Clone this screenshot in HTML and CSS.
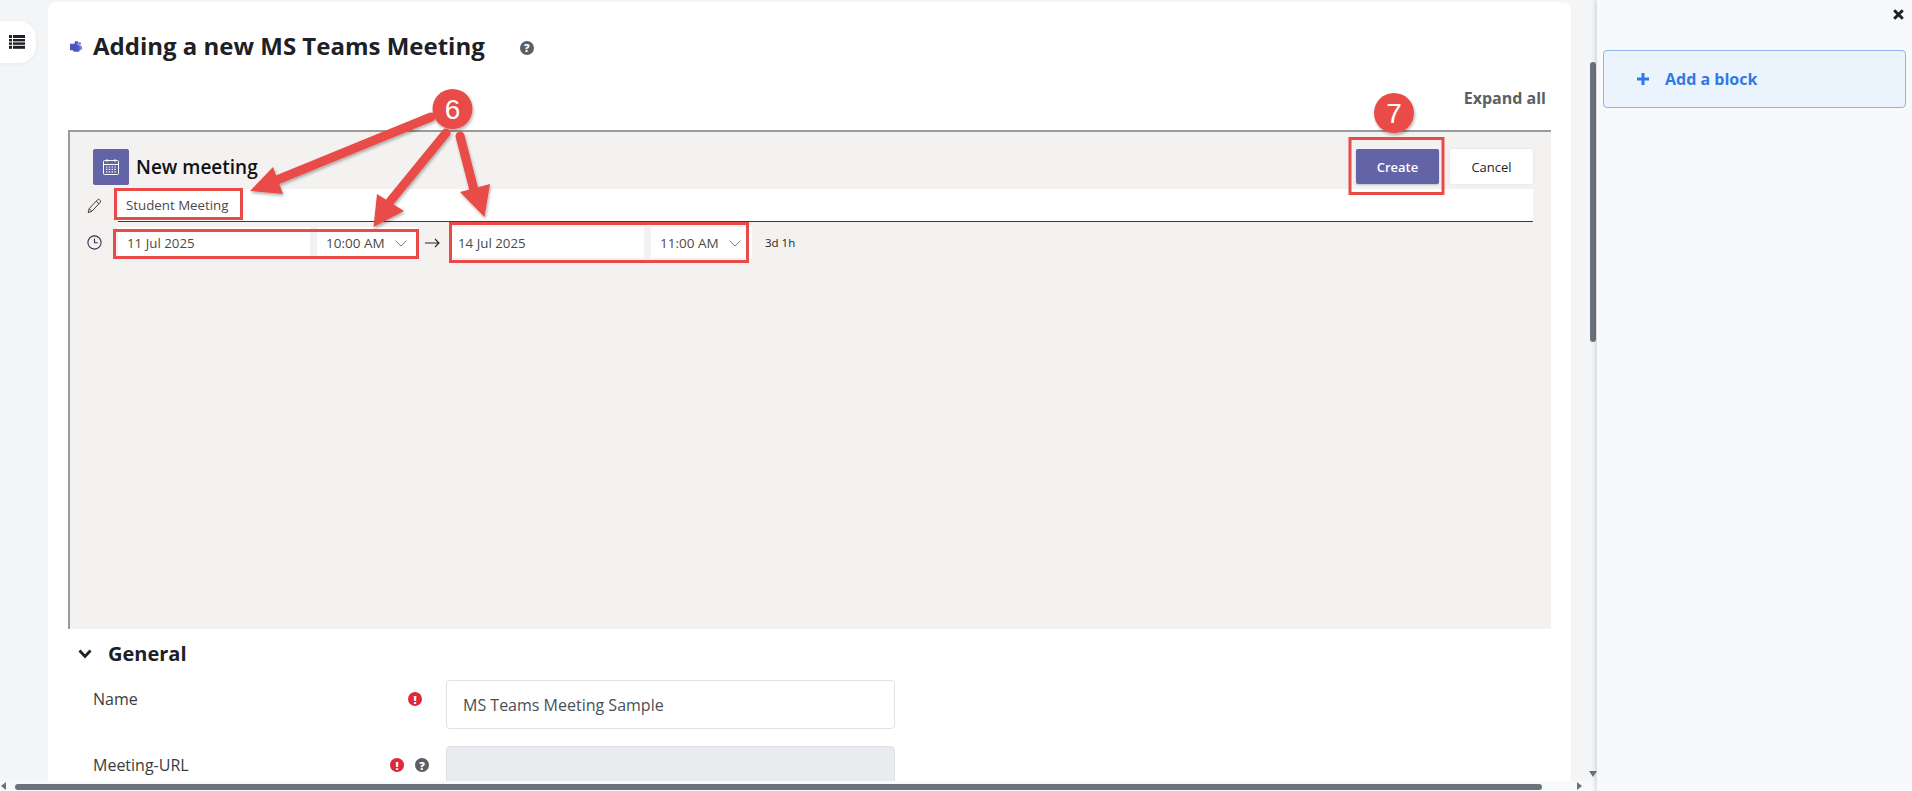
FILE: index.html
```html
<!DOCTYPE html>
<html lang="en">
<head>
<meta charset="utf-8">
<title>Adding a new MS Teams Meeting</title>
<link rel="stylesheet" href="styles.css">
</head>
<body>
<div class="page">
  <div class="main">
    <div class="main-top">
      <div class="rail">
        <div class="toggle">
          <svg width="16" height="14" viewBox="0 0 16 14"><g fill="#1d2125"><rect x="0" y="0" width="3" height="3"/><rect x="4" y="0" width="12" height="3"/><rect x="0" y="4" width="3" height="2.4"/><rect x="4" y="4" width="12" height="2.4"/><rect x="0" y="7.4" width="3" height="2.4"/><rect x="4" y="7.4" width="12" height="2.4"/><rect x="0" y="10.8" width="3" height="3"/><rect x="4" y="10.8" width="12" height="3"/></g></svg>
        </div>
      </div>
      <div class="card">
        <div class="page-title">
          <svg class="teams-logo" width="12" height="11" viewBox="0 0 12 11"><circle cx="9.6" cy="2.6" r="1.5" fill="#7b83eb"/><circle cx="6.4" cy="1.9" r="1.9" fill="#5059c9"/><rect x="7.5" y="4.4" width="4.5" height="4.6" rx="1.5" fill="#7b83eb"/><rect x="3" y="3.8" width="6.6" height="7" rx="1.6" fill="#5059c9"/><rect x="0" y="2.8" width="6.4" height="6.4" rx=".6" fill="#4b53bc"/></svg>
          <h1 class="title">Adding a new MS Teams Meeting</h1>
          <span class="help help-title">?</span>
        </div>
        <div class="expand-row"><span class="expand">Expand all</span></div>

        <div class="frame">
          <div class="frame-head">
            <div class="cal-tile">
              <svg width="18" height="18" viewBox="0 0 18 18" fill="none" stroke="#fff"><rect x="1.5" y="2.5" width="15" height="14" rx="1"/><path d="M1.5 6.5h15M5 1v3M13 1v3"/><g stroke-dasharray="1.4 1.4" stroke-width="1.2"><path d="M4 9h10M4 11.4h10M4 13.8h10"/></g></svg>
            </div>
            <div class="frame-title">New meeting</div>
            <div class="btn btn-primary">Create</div>
            <div class="btn btn-plain">Cancel</div>
          </div>

          <div class="subject-row">
            <div class="row-icon">
              <svg width="15" height="16" viewBox="0 0 15 16" fill="none" stroke="#403c3a"><path d="M1.2 14.6l1-4L10.6 1.7a1.4 1.4 0 0 1 2 0l.6.6a1.4 1.4 0 0 1 0 2L4.900 13.300z"/><path d="M9.300 3.200l2.800 2.600M2.200 10.600l2.600 2.600"/></svg>
            </div>
            <div class="subject">Student Meeting</div>
          </div>

          <div class="date-row">
            <div class="row-icon">
              <svg width="15" height="15" viewBox="0 0 15 15" fill="none" stroke="#3b2a4a" stroke-width="1.100"><circle cx="7.500" cy="7.500" r="6.600"/><path d="M7.500 3.500v4.300h3.300"/></svg>
            </div>
            <div class="field date">11 Jul 2025</div>
            <div class="field time">10:00 AM
              <svg class="caret" width="12" height="7" viewBox="0 0 12 7" fill="none" stroke="#7a7a7a"><path d="M.5 .7L6 6l5.500-5.300"/></svg>
            </div>
            <svg class="to-arrow" width="15" height="10" viewBox="0 0 15 10" fill="none" stroke="#252423" stroke-width="1.100"><path d="M0 5h14M10 1l4 4-4 4"/></svg>
            <div class="field date date-end">14 Jul 2025</div>
            <div class="field time">11:00 AM
              <svg class="caret" width="12" height="7" viewBox="0 0 12 7" fill="none" stroke="#7a7a7a"><path d="M.5 .7L6 6l5.500-5.300"/></svg>
            </div>
            <div class="duration">3d 1h</div>
          </div>
        </div>

        <div class="section-head">
          <svg width="14" height="10" viewBox="0 0 14 10" fill="none" stroke="#1d2125" stroke-width="2.800"><path d="M1.500 1.500L7 7.500l5.500-6"/></svg>
          <h3 class="section-title">General</h3>
        </div>

        <div class="form-row form-row-name">
          <div class="form-label">
            <span class="label-text">Name</span>
            <span class="req">!</span>
          </div>
          <div class="form-input">MS Teams Meeting Sample</div>
        </div>
        <div class="form-row form-row-url">
          <div class="form-label">
            <span class="label-text">Meeting-URL</span>
            <span class="req req-url">!</span>
            <span class="help">?</span>
          </div>
          <div class="form-input form-input-disabled"></div>
        </div>
      </div>
      <div class="vscroll">
        <div class="vthumb"></div>
        <div class="varrow"></div>
      </div>
    </div>
    <div class="hscroll">
      <div class="harrow-left"></div>
      <div class="hthumb"></div>
      <div class="harrow-right"></div>
    </div>
  </div>

  <aside class="side">
    <div class="close-row">
      <svg width="11" height="11" viewBox="0 0 11 11" fill="none" stroke="#1d2125" stroke-width="3"><path d="M1.200 1.200l8.600 8.600M9.800 1.200l-8.600 8.600"/></svg>
    </div>
    <div class="add-block">
      <svg width="12" height="12" viewBox="0 0 12 12" fill="none" stroke="#2f7be5" stroke-width="3"><path d="M6 0v12M0 6h12"/></svg>
      <span class="add-text">Add a block</span>
    </div>
  </aside>

  <svg class="notes" width="1912" height="791" viewBox="0 0 1912 791">
    <defs>
      <filter id="sh" x="-20%" y="-20%" width="150%" height="150%"><feDropShadow dx="1" dy="2" stdDeviation="1.500" flood-color="#000" flood-opacity=".3"/></filter>
    </defs>
    <g fill="none" stroke="#e94b48" stroke-width="3">
      <rect x="115.500" y="189.500" width="126" height="29"/>
      <rect x="114.500" y="230.500" width="303" height="27"/>
      <rect x="450.500" y="223.500" width="297" height="38"/>
      <rect x="1350" y="138.500" width="93" height="55"/>
    </g>
    <g fill="#e94b48" stroke="#e94b48" filter="url(#sh)">
      <line x1="431" y1="117" x2="272" y2="182" stroke-width="9" stroke-linecap="round"/>
      <polygon points="250,191 273,167 283,194" stroke="none"/>
      <line x1="446" y1="133" x2="388" y2="204" stroke-width="9" stroke-linecap="round"/>
      <polygon points="373.500,227 377,194 404,211" stroke="none"/>
      <line x1="460" y1="136" x2="474" y2="190" stroke-width="9" stroke-linecap="round"/>
      <polygon points="484.500,217 460,192 490,184" stroke="none"/>
      <circle cx="452.500" cy="109" r="20" stroke="none"/>
      <circle cx="1394" cy="113" r="20" stroke="none"/>
    </g>
    <text class="note-num" x="452.500" y="119">6</text>
    <text class="note-num" x="1394" y="123">7</text>
  </svg>
</div>
</body>
</html>
```
FILE: styles.css
```css
* { box-sizing: border-box; }
html, body { margin: 0; padding: 0; height: 100%; overflow: hidden; }
body { font-family: "Open Sans", "Noto Sans", sans-serif; color: #1d2125; background: #f4f5f7; }
h1, h3 { margin: 0; }

.page { position: relative; display: flex; width: 1912px; height: 791px; }
.main { width: 1597px; display: flex; flex-direction: column; background: #f4f5f7; }
.main-top { display: flex; height: 781px; }

.rail { width: 48px; flex: none; padding-top: 21px; }
.toggle { width: 36px; height: 42px; background: #fff; border-radius: 0 18px 18px 0; box-shadow: 0 1px 4px rgba(0,0,0,.05); display: flex; align-items: center; justify-content: center; padding-right: 3px; }

.card { width: 1523px; flex: none; margin-top: 2px; padding: 0 20px; background: #fff; border-radius: 8px 8px 0 0; overflow: hidden; }

.page-title { display: flex; align-items: center; height: 69px; padding: 18px 0 0 2px; }
.teams-logo { margin-right: 11px; margin-top: 2px; }
.title { font-size: 24px; font-weight: 700; line-height: 32px; color: #1d2125; white-space: nowrap; }
.help { display: inline-flex; align-items: center; justify-content: center; width: 14px; height: 14px; border-radius: 50%; background: #5c5f63; color: #fff; font-size: 11px; font-weight: 800; line-height: 1; }
.help-title { margin: 4px 0 0 35px; }

.expand-row { display: flex; justify-content: flex-end; height: 59px; padding: 15px 5px 0 0; }
.expand { font-size: 16px; font-weight: 700; line-height: 24px; color: #5c5f63; }

.frame { height: 499px; background: #f3f2f1; border-top: 2px solid #9a9a9a; border-left: 2px solid #9a9a9a; }
.frame-head { display: flex; align-items: center; height: 53px; padding: 17px 18px 0 23px; }
.cal-tile { width: 36px; height: 36px; border-radius: 2px; background: #6264a7; display: flex; align-items: center; justify-content: center; }
.frame-title { flex: 1; margin-left: 7px; font-size: 19px; font-weight: 600; line-height: 36px; color: #111; }
.btn { width: 83px; height: 35px; margin-top: -2px; border-radius: 2px; font-size: 13px; line-height: 36px; text-align: center; }
.btn-primary { background: #6264a7; color: #fff; font-weight: 600; box-shadow: 0 1px 2px rgba(0,0,0,.2); }
.btn-plain { margin-left: 11px; background: #fff; color: #252423; font-weight: 500; box-shadow: 0 0 2px rgba(0,0,0,.12); }

.subject-row { display: flex; margin-top: 4px; padding-right: 18px; }
.row-icon { width: 48px; flex: none; display: flex; align-items: center; justify-content: center; }
.subject { flex: 1; height: 33px; padding-left: 8px; background: #fff; border-bottom: 1px solid #3b3a39; border-radius: 2px 2px 0 0; font-size: 13.300px; line-height: 32px; color: #4b4a48; }

.date-row { display: flex; align-items: center; height: 31px; margin-top: 5px; }
.field { display: flex; align-items: center; height: 31px; padding-top: 1px; background: #fff; font-size: 13.300px; color: #4b4a48; }
.date { width: 192px; padding-left: 9px; }
.date-end { width: 195px; }
.time { width: 101px; margin-left: 7px; padding-left: 9px; position: relative; font-size: 13.500px; }
.caret { margin-left: 10px; }
.to-arrow { margin: 0 9px 0 7px; }
.duration { margin-left: 13px; font-size: 11.500px; color: #252423; }

.section-head { display: flex; align-items: center; height: 51px; padding: 0 0 2px 10px; }
.section-title { margin-left: 16px; font-size: 20px; font-weight: 700; line-height: 28px; }

.form-row { display: flex; }
.form-row-name { height: 49px; }
.form-row-url { margin-top: 17px; height: 49px; }
.form-label { width: 378px; flex: none; display: flex; align-items: flex-start; padding: 7px 0 0 25px; position: relative; font-size: 16px; line-height: 24px; color: #1d2125; }
.label-text { flex: 1; color: #3a3d40; }
.req { display: inline-flex; align-items: center; justify-content: center; width: 14px; height: 14px; margin: 5px 24px 0 0; border-radius: 50%; background: #dc2a3c; color: #fff; font-size: 11px; font-weight: 800; line-height: 1; }
.req-url { margin-right: 11px; }
.form-row-url .form-label .help { margin: 5px 17px 0 0; }
.form-input { width: 449px; height: 49px; padding-left: 16px; border: 1px solid #dee2e6; border-radius: 4px; font-size: 16px; line-height: 49px; color: #495057; }
.form-input-disabled { background: #e9ecef; }

.vscroll { flex: 1; position: relative; }
.vthumb { position: absolute; left: 19px; top: 62px; width: 6px; height: 280px; border-radius: 3px; background: #6a737b; }
.varrow { position: absolute; left: 18px; top: 771px; border: 4px solid transparent; border-top: 6px solid #6a737b; border-bottom: 0; }

.hscroll { flex: 1; position: relative; display: flex; align-items: center; background: #f8f9fa; }
.harrow-left { margin-left: 1px; border: 4px solid transparent; border-right: 5px solid #6a737b; border-left: 0; }
.hthumb { width: 1527px; height: 6px; margin: 1px 0 0 9px; border-radius: 3px; background: #6a737b; }
.harrow-right { margin-left: 35px; border: 4px solid transparent; border-left: 5px solid #6a737b; border-right: 0; }

.side { flex: 1; position: relative; background: #f8f9fb; box-shadow: -2px 0 4px rgba(0,0,0,.12); padding: 0 6px 0 6px; }
.close-row { display: flex; justify-content: flex-end; height: 50px; padding: 9px 2px 0 0; }
.add-block { display: flex; align-items: center; height: 58px; padding-left: 33px; background: #ebf3fd; border: 1px solid #8ab6ee; border-radius: 4px; }
.add-text { margin-left: 16px; font-size: 16px; font-weight: 700; color: #2f7be5; }

.notes { position: absolute; left: 0; top: 0; pointer-events: none; }
.note-num { font-family: "Liberation Sans", sans-serif; font-size: 28px; fill: #fff; text-anchor: middle; }
```
